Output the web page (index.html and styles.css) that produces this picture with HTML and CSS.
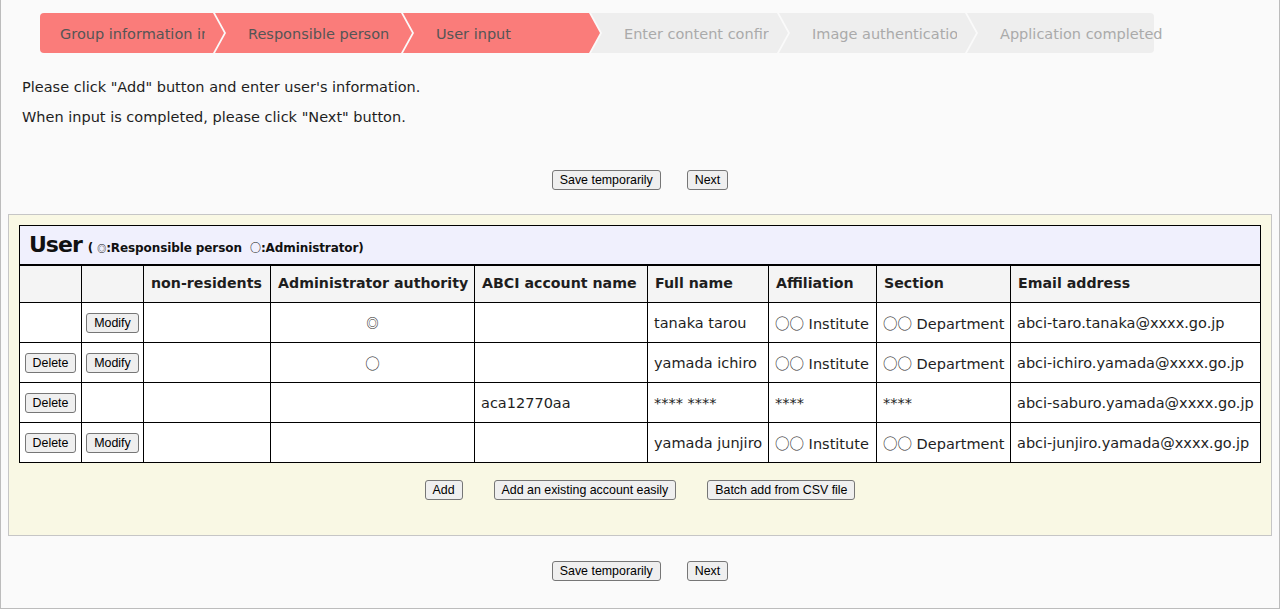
FILE: index.html
```html
<!DOCTYPE html>
<html lang="en">
<head>
<meta charset="utf-8">
<title>User input</title>
<link rel="stylesheet" href="styles.css">
</head>
<body>
<div class="page">
  <ol class="steps">
    <li class="step first done"><span class="label">Group information input</span></li>
    <li class="step done"><span class="label">Responsible person</span></li>
    <li class="step done"><span class="label">User input</span></li>
    <li class="step"><span class="label">Enter content confirmation</span></li>
    <li class="step"><span class="label">Image authentication</span></li>
    <li class="step last"><span class="label">Application completed</span></li>
  </ol>

  <div class="guide">
    <p>Please click "Add" button and enter user's information.</p>
    <p>When input is completed, please click "Next" button.</p>
  </div>

  <div class="actions top">
    <button type="button">Save temporarily</button>
    <button type="button">Next</button>
  </div>

  <section class="panel">
    <table class="users">
      <colgroup>
        <col class="c-del">
        <col class="c-mod">
        <col class="c-nonres">
        <col class="c-admin">
        <col class="c-acct">
        <col class="c-name">
        <col class="c-aff">
        <col class="c-sec">
        <col class="c-mail">
      </colgroup>
      <thead>
        <tr class="title-row">
          <th colspan="9" class="title"><span class="title-text">User</span> <span class="legend">( <span class="sym sym-small">◎</span>:Responsible person&nbsp; <span class="sym">○</span>:Administrator)</span></th>
        </tr>
        <tr class="head-row">
          <th></th>
          <th></th>
          <th>non-residents</th>
          <th>Administrator authority</th>
          <th>ABCI account name</th>
          <th>Full name</th>
          <th>Affiliation</th>
          <th>Section</th>
          <th>Email address</th>
        </tr>
      </thead>
      <tbody>
        <tr>
          <td class="btn-cell"></td>
          <td class="btn-cell"><button type="button">Modify</button></td>
          <td></td>
          <td class="mark"><span class="cjk mark-resp">◎</span></td>
          <td></td>
          <td>tanaka tarou</td>
          <td><span class="cjk">○○</span> Institute</td>
          <td><span class="cjk">○○</span> Department</td>
          <td>abci-taro.tanaka@xxxx.go.jp</td>
        </tr>
        <tr>
          <td class="btn-cell"><button type="button">Delete</button></td>
          <td class="btn-cell"><button type="button">Modify</button></td>
          <td></td>
          <td class="mark"><span class="cjk">○</span></td>
          <td></td>
          <td>yamada ichiro</td>
          <td><span class="cjk">○○</span> Institute</td>
          <td><span class="cjk">○○</span> Department</td>
          <td>abci-ichiro.yamada@xxxx.go.jp</td>
        </tr>
        <tr>
          <td class="btn-cell"><button type="button">Delete</button></td>
          <td class="btn-cell"></td>
          <td></td>
          <td class="mark"></td>
          <td>aca12770aa</td>
          <td>**** ****</td>
          <td>****</td>
          <td>****</td>
          <td>abci-saburo.yamada@xxxx.go.jp</td>
        </tr>
        <tr>
          <td class="btn-cell"><button type="button">Delete</button></td>
          <td class="btn-cell"><button type="button">Modify</button></td>
          <td></td>
          <td class="mark"></td>
          <td></td>
          <td>yamada junjiro</td>
          <td><span class="cjk">○○</span> Institute</td>
          <td><span class="cjk">○○</span> Department</td>
          <td>abci-junjiro.yamada@xxxx.go.jp</td>
        </tr>
      </tbody>
    </table>

    <div class="actions add">
      <button type="button">Add</button>
      <button type="button">Add an existing account easily</button>
      <button type="button">Batch add from CSV file</button>
    </div>
  </section>

  <div class="actions bottom">
    <button type="button">Save temporarily</button>
    <button type="button">Next</button>
  </div>
</div>
</body>
</html>
```

FILE: styles.css
```css
* {
  box-sizing: border-box;
}

html,
body {
  margin: 0;
  background: #ffffff;
}

body {
  font-family: "DejaVu Sans", "Noto Sans CJK JP", sans-serif;
  font-size: 14.5px;
  color: #1e1e1e;
}

.page {
  width: 1280px;
  background: #fafafa;
  border: 1px solid #bcbcbc;
  border-top: 0;
  padding: 13px 0 27px;
}

/* progress steps */
.steps {
  list-style: none;
  margin: 0 0 0 39px;
  padding: 0;
  display: flex;
  height: 40px;
  isolation: isolate;
}

.step {
  position: relative;
  flex: none;
  width: 197px;
  height: 40px;
  margin-left: -9px;
  padding-left: 33px;
  padding-top: 1px;
  line-height: 40px;
  color: #aaaaaa;
}

.step::before {
  content: "";
  position: absolute;
  inset: 0;
  z-index: -1;
  background: #eeeeee;
  clip-path: polygon(0 0, calc(100% - 11px) 0, 100% 50%, calc(100% - 11px) 100%, 0 100%, 11px 50%);
}

.step.done {
  color: #555555;
}

.step.done::before {
  background: #fa7c7a;
}

.step.first {
  width: 184px;
  margin-left: 0;
  padding-left: 20px;
}

.step.first::before {
  border-radius: 4px 0 0 4px;
  clip-path: polygon(0 0, calc(100% - 11px) 0, 100% 50%, calc(100% - 11px) 100%, 0 100%);
}

.step.last {
  width: 187px;
}

.step.last::before {
  border-radius: 0 4px 4px 0;
  clip-path: polygon(0 0, 100% 0, 100% 100%, 0 100%, 11px 50%);
}

.label {
  display: block;
  width: 145px;
  overflow: hidden;
  white-space: nowrap;
}

.step.last .label {
  overflow: visible;
}

/* guide text */
.guide {
  margin-top: 19px;
  padding-left: 21px;
}

.guide p {
  margin: 0;
  line-height: 30px;
}

/* buttons */
button {
  font-family: "Liberation Sans", Arial, sans-serif;
  font-size: 12.4px;
  color: #000000;
  background: #efefef;
  border: 1px solid #767676;
  border-radius: 3px;
  padding: 1px 7px;
  height: 20px;
  line-height: 16px;
  margin: 0;
}

.actions {
  display: flex;
  justify-content: center;
}

.actions.top {
  margin-top: 38px;
  gap: 26px;
}

.actions.bottom {
  margin-top: 25px;
  gap: 26px;
}

.actions.add {
  margin-top: 17px;
  gap: 31px;
}

/* panel */
.panel {
  margin: 24px 7px 0;
  background: #f9f8e4;
  border: 1px solid #c6c6c6;
  padding: 10px 10px 35px;
}

.users {
  width: 100%;
  border-collapse: collapse;
  table-layout: fixed;
  border: 1px solid #000000;
  background: #ffffff;
}

.c-del { width: 62px; }
.c-mod { width: 62px; }
.c-nonres { width: 127px; }
.c-admin { width: 204px; }
.c-acct { width: 173px; }
.c-name { width: 121px; }
.c-aff { width: 108px; }
.c-sec { width: 134px; }

.users th,
.users td {
  border: 1px solid #000000;
  white-space: nowrap;
  overflow: hidden;
  vertical-align: middle;
}

.title-row th {
  height: 39px;
  background: #f0f0fd;
  border-bottom: 2px solid #000000;
  text-align: left;
  padding: 0 0 0 9px;
  color: #111111;
}

.title-text {
  font-size: 22px;
  font-weight: bold;
  letter-spacing: -1px;
}

.legend {
  font-size: 12px;
  font-weight: bold;
  margin-left: 1px;
  letter-spacing: -0.1px;
}

.sym {
  font-family: "Noto Sans CJK JP", sans-serif;
  font-size: 11px;
  font-weight: bold;
}

.sym-small {
  font-size: 9px;
}

.head-row th {
  height: 38px;
  background: #f4f4f4;
  font-size: 14.2px;
  font-weight: bold;
  text-align: left;
  padding: 0 7px 2px;
  color: #1e1e1e;
}

.users tbody td {
  height: 40px;
  padding: 0 6px;
}

.users tbody td.btn-cell,
.users tbody td.mark {
  text-align: center;
  padding: 0;
}

.cjk {
  font-family: "Noto Sans CJK JP", sans-serif;
}

.mark-resp {
  font-size: 12px;
  font-weight: bold;
}
```
